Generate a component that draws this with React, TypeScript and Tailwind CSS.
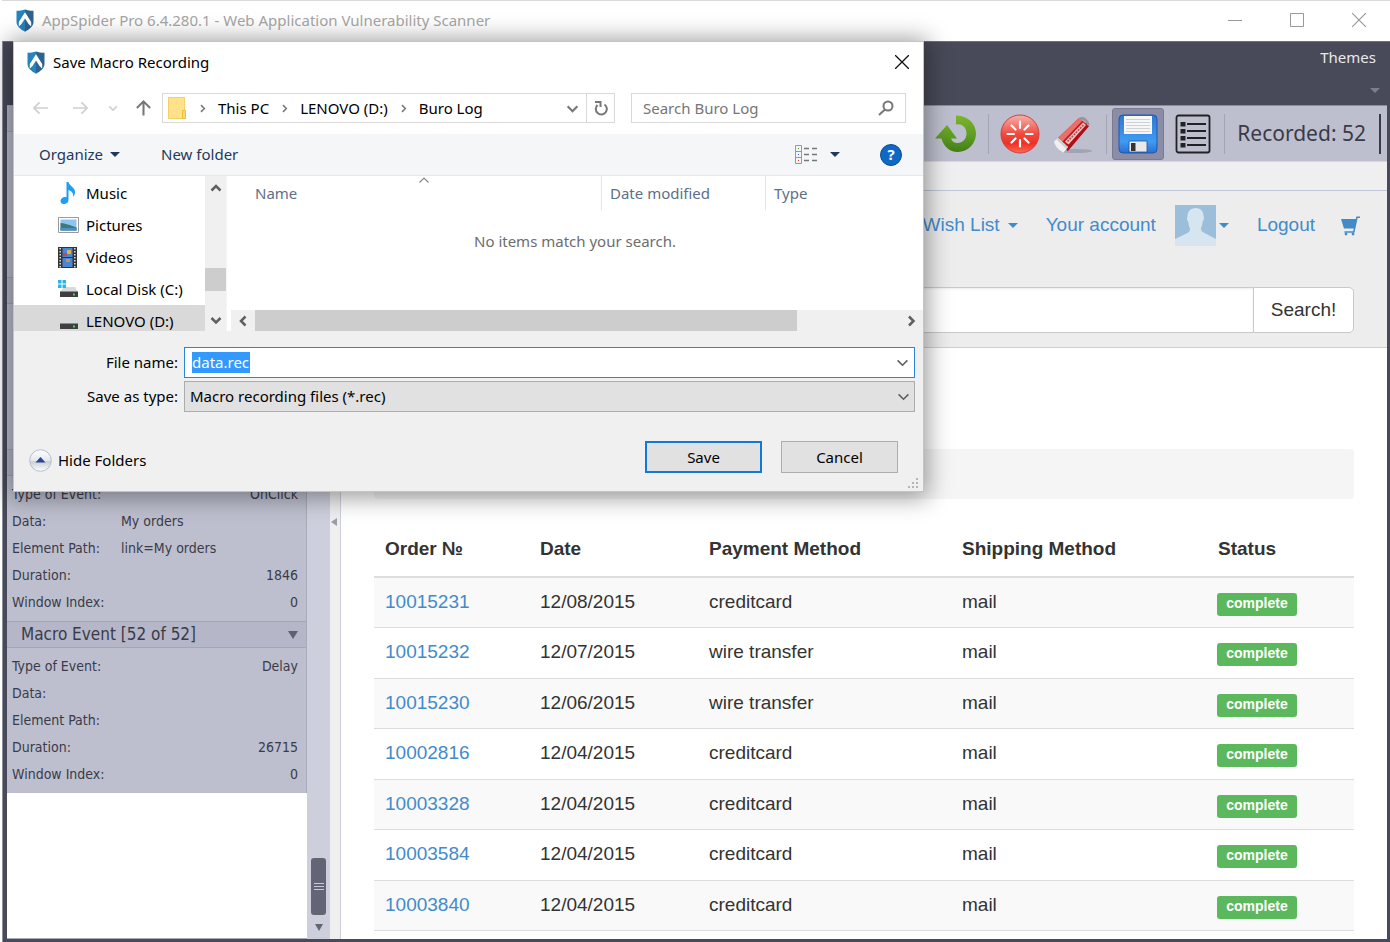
import type { ReactNode } from "react";

type MacroEvent = {
  title?: string;
  rows: { label: string; value?: string; align?: "left" | "right" }[];
};

const macroEvents: MacroEvent[] = [
  { rows: [] },
  { rows: [] },
  {
    rows: [
      { label: "Type of Event:", value: "OnClick", align: "right" },
      { label: "Data:", value: "My orders", align: "left" },
      { label: "Element Path:", value: "link=My orders", align: "left" },
      { label: "Duration:", value: "1846", align: "right" },
      { label: "Window Index:", value: "0", align: "right" },
    ],
  },
  {
    title: "Macro Event [52 of 52]",
    rows: [
      { label: "Type of Event:", value: "Delay", align: "right" },
      { label: "Data:" },
      { label: "Element Path:" },
      { label: "Duration:", value: "26715", align: "right" },
      { label: "Window Index:", value: "0", align: "right" },
    ],
  },
];

const orders = [
  { id: "10015231", date: "12/08/2015", payment: "creditcard" },
  { id: "10015232", date: "12/07/2015", payment: "wire transfer" },
  { id: "10015230", date: "12/06/2015", payment: "wire transfer" },
  { id: "10002816", date: "12/04/2015", payment: "creditcard" },
  { id: "10003328", date: "12/04/2015", payment: "creditcard" },
  { id: "10003584", date: "12/04/2015", payment: "creditcard" },
  { id: "10003840", date: "12/04/2015", payment: "creditcard" },
];

function ShieldIcon() {
  return (
    <svg width="18" height="23" viewBox="0 0 18 23" className="shrink-0">
      <path d="M9 .5C6.500 1.500 3.500 1.800.5 1.800V13c0 4.500 4.500 7.500 8.500 9.700z" fill="#2583bd" />
      <path d="M9 .5c2.500 1 5.500 1.300 8.500 1.300V13c0 4.500-4.500 7.500-8.500 9.700z" fill="#2d6390" />
      <path d="M9 3.200 15.200 13v4.500L12.500 15 9 9.500 5.500 15l-2.700 2.500V13z" fill="#fff" />
    </svg>
  );
}

function Chevron({
  dir,
  size = 12,
  color = "#606060",
  stroke = 2,
}: {
  dir: "up" | "down" | "left" | "right";
  size?: number;
  color?: string;
  stroke?: number;
}) {
  const paths = {
    up: "M1.500 8.500 6 4l4.500 4.500",
    down: "M1.500 4 6 8.500 10.500 4",
    left: "M8.500 1.500 4 6l4.500 4.500",
    right: "M4 1.500 8.500 6 4 10.500",
  };
  return (
    <svg width={size} height={size} viewBox="0 0 12 12" fill="none" className="shrink-0">
      <path d={paths[dir]} stroke={color} strokeWidth={stroke} />
    </svg>
  );
}

function Caret({ className, width = 10 }: { className: string; width?: number }) {
  return (
    <svg width={width} height={width / 2} viewBox="0 0 10 5" className={`shrink-0 ${className}`}>
      <path d="M0 0h10L5 5z" fill="currentColor" />
    </svg>
  );
}

function TitleBar() {
  return (
    <header className="flex h-[41px] shrink-0 items-center border-t border-[#d9d9d9] bg-white pb-[2px] pl-[14px]">
      <ShieldIcon />
      <h1 className="flex-1 pl-2 text-[15px] text-[#a6a6a6]">
        AppSpider Pro 6.4.280.1 - Web Application Vulnerability Scanner
      </h1>
      <div className="flex items-center gap-12 pr-6 text-[#999]">
        <button aria-label="Minimize">
          <svg width="14" height="14" viewBox="0 0 14 14">
            <path d="M0 7.500h14" stroke="currentColor" />
          </svg>
        </button>
        <button aria-label="Maximize">
          <svg width="14" height="14" viewBox="0 0 14 14" fill="none">
            <path d="M.5.5h13v13H.5z" stroke="currentColor" />
          </svg>
        </button>
        <button aria-label="Close">
          <svg width="14" height="14" viewBox="0 0 14 14">
            <path d="m0 0 14 14M14 0 0 14" stroke="currentColor" strokeWidth="1.200" />
          </svg>
        </button>
      </div>
    </header>
  );
}

function Ribbon() {
  return (
    <div className="flex h-16 shrink-0 flex-col items-end border-t border-[#6f7180] bg-[#484a59]">
      <button className="pt-[3px] pr-[14px] text-[15px] leading-6 text-[#e8e8ee]">Themes</button>
      <Caret className="mt-[19px] mr-[10px] text-[#7c7e90]" />
    </div>
  );
}

function EventGroup({ title, rows }: MacroEvent) {
  return (
    <section className="h-[172px] border-r border-[#a9aaba] bg-[#bdbfce]">
      <div className="flex h-[27px] items-center justify-between border-y border-[#a4a6b6] bg-[#b5b7c8] pr-2 pl-[14px]">
        <h2 className="text-[17px] text-[#3a3b49]">{title}</h2>
        {title && (
          <button aria-label="Collapse">
            <svg width="10" height="8" viewBox="0 0 10 8">
              <path d="M0 0h10L5 8z" fill="#5f6173" />
            </svg>
          </button>
        )}
      </div>
      <dl className="pt-[5px] pr-2 pl-[5px] text-[14px] text-[#3a3b49]">
        {rows.map((row) => (
          <div key={row.label} className="flex h-[27px] items-center">
            <dt className="w-[109px]">{row.label}</dt>
            <dd className={row.align === "right" ? "flex-1 text-right" : "flex-1"}>{row.value}</dd>
          </div>
        ))}
      </dl>
    </section>
  );
}

function Sidebar() {
  return (
    <aside className="flex w-[323px] shrink-0 bg-white font-['DejaVu_Sans_Condensed','DejaVu_Sans',sans-serif]">
      <div className="flex-1 border-b border-[#a9aaba]">
        {macroEvents.map((event, i) => (
          <EventGroup key={i} {...event} />
        ))}
      </div>
      <div className="flex w-[23px] flex-col items-center justify-end bg-[#cdcfdc] pb-2">
        <div className="flex h-[57px] w-[15px] flex-col items-center justify-center gap-[2px] rounded-[3px] bg-[#636577]">
          <span className="h-px w-[10px] bg-[#c8cad6]" />
          <span className="h-px w-[10px] bg-[#c8cad6]" />
          <span className="h-px w-[10px] bg-[#c8cad6]" />
        </div>
        <svg width="8" height="7" viewBox="0 0 8 7" className="mt-[9px]">
          <path d="M0 0h8L4 7z" fill="#636577" />
        </svg>
      </div>
    </aside>
  );
}

function Splitter() {
  return (
    <div className="flex w-[11px] shrink-0 items-center border-r border-[#cdcfdc] bg-[#efefef] pl-px">
      <svg width="6" height="8" viewBox="0 0 6 8">
        <path d="M6 0v8L0 4z" fill="#9a9cab" />
      </svg>
    </div>
  );
}

function RefreshIcon() {
  return (
    <svg width="42" height="38" viewBox="0 0 42 38">
      <defs>
        <linearGradient id="leaf" x1="0" y1="0" x2="0" y2="1">
          <stop offset="0" stopColor="#7cb52c" />
          <stop offset=".6" stopColor="#5c9a22" />
          <stop offset="1" stopColor="#437d18" />
        </linearGradient>
      </defs>
      <path
        d="M21 .5C32 0 41 8.500 41 18.500 41 28.500 33 37 23 37 14 37 8.500 31 6.500 23.500H0L12 10 22 23.500H16c1 3 3.500 4.500 6.500 4.500 5 0 9-4 9-9.500C31.500 13 27.500 8 21 9.500z"
        fill="url(#leaf)"
      />
    </svg>
  );
}

function RecordIcon() {
  return (
    <svg width="40" height="40" viewBox="0 0 40 40">
      <defs>
        <linearGradient id="rec" x1="0" y1="0" x2="0" y2="1">
          <stop offset="0" stopColor="#f7b3ac" />
          <stop offset=".5" stopColor="#ee4a40" />
          <stop offset=".75" stopColor="#f03026" />
          <stop offset="1" stopColor="#ff6a55" />
        </linearGradient>
      </defs>
      <circle cx="20" cy="20" r="19" fill="url(#rec)" stroke="#c9403a" />
      <g stroke="#fff" strokeWidth="2.200" strokeLinecap="round">
        <path d="M20 7.500V14M20 26v6.500M7.500 20H14M26 20h6.500" />
        <path d="m11.500 11.500 4 4M24.500 24.500l4 4M28.500 11.500l-4 4M15.500 24.500l-4 4" />
      </g>
    </svg>
  );
}

function EraserIcon() {
  return (
    <svg width="40" height="40" viewBox="0 0 40 40">
      <ellipse cx="23" cy="37" rx="16" ry="2" fill="#8f91a3" opacity=".6" />
      <path d="M5 24 26 4l10 8-21 25z" fill="#c9161c" />
      <path d="M5 24 26 4l3.500 2.500L9 28z" fill="#e8706a" />
      <path d="M12 32 33.500 8.500 36 12 14.500 37z" fill="#b00f18" />
      <path d="m12 27.500 18-19 3 2.500-17.500 19.500z" fill="#f0c4c0" />
      <path d="M14.500 27.500 31 10.500" stroke="#b84a4a" strokeWidth="1.600" strokeDasharray="2 1" />
      <path d="M25.500 4.500c2-2 5.500-2 8 .5s3.500 5 2.500 7.500l-2-1.500c-1-3-3-5-6-5.500z" fill="#98989c" />
      <path d="M1 27.500 5 24l10 9-4.500 5.500C7 37.500 2 32.500 1 27.500z" fill="#f0f0ef" />
      <path d="M5 24l10 9-1.500 2L3.500 25.500z" fill="#cfcfd0" />
    </svg>
  );
}

function FloppyIcon() {
  return (
    <svg width="40" height="40" viewBox="0 0 40 40">
      <defs>
        <linearGradient id="disk" x1="0" y1="0" x2="0" y2="1">
          <stop offset="0" stopColor="#2f78d3" />
          <stop offset=".7" stopColor="#3f9bf2" />
          <stop offset="1" stopColor="#2a6fd0" />
        </linearGradient>
      </defs>
      <rect x="1" y="1" width="38" height="38" rx="4" fill="url(#disk)" stroke="#2057b0" />
      <path d="M6 2h28v18H6z" fill="#f7f7f7" />
      <path d="M8 5.500h24M8 8.500h24M8 11.500h24M8 14.500h24M8 17.500h24" stroke="#c4c7cc" strokeWidth=".8" />
      <path d="M11 27h18v11H11z" fill="#e9e9e9" stroke="#24508f" strokeWidth=".8" />
      <path d="M13 29h4.500v8H13z" fill="#333" />
    </svg>
  );
}

function ListIcon() {
  return (
    <svg width="36" height="40" viewBox="0 0 36 40" fill="none">
      <rect x="1.500" y="1.500" width="33" height="37" rx="2" stroke="#222" strokeWidth="1.800" />
      <path d="M12 10h19M12 17h19M12 24h19M12 31h19" stroke="#222" strokeWidth="1.800" />
      <path d="M5.500 8h5v4.500h-5zM5.500 15h5v4.500h-5zM5.500 22h5v4.500h-5zM5.500 29h5v4.500h-5z" fill="#222" />
    </svg>
  );
}

function ToolbarDivider() {
  return <span className="h-10 w-px bg-[#a3a5b5]" />;
}

function RecorderToolbar() {
  return (
    <div className="flex h-14 shrink-0 items-center justify-end border-t border-[#8b8d9d] bg-[#bdbfce] pr-[6px]">
      <button aria-label="Refresh" className="mr-[11px]">
        <RefreshIcon />
      </button>
      <ToolbarDivider />
      <button aria-label="Record" className="ml-[11px]">
        <RecordIcon />
      </button>
      <button aria-label="Erase" className="mx-[13px]">
        <EraserIcon />
      </button>
      <ToolbarDivider />
      <button
        aria-label="Save"
        className="mr-[11px] ml-[5px] flex size-[52px] items-center justify-center rounded-[3px] border border-[#797b90] bg-[#8b8da6]"
      >
        <FloppyIcon />
      </button>
      <button aria-label="Event list" className="mr-[13px]">
        <ListIcon />
      </button>
      <ToolbarDivider />
      <span className="ml-3 text-[21px] text-[#3a3b49]">Recorded: 52</span>
      <span className="ml-[13px] h-10 w-[2px] bg-[#3a3b49]" />
    </div>
  );
}

function ShopHeader() {
  return (
    <div className="border-y border-t-[#c0c6d8] border-b-[#cfcfcf] bg-[#ededed] pb-[14px]">
      <nav className="flex h-[69px] items-center justify-end pr-[27px] text-[19px] text-[#428bca]">
        <a href="#wishlist" className="flex items-center gap-2">
          Wish List <Caret className="text-[#428bca]" />
        </a>
        <a href="#account" className="ml-7">
          Your account
        </a>
        <a href="#profile" aria-label="Profile" className="ml-[19px] flex items-center gap-[3px]">
          <svg width="41" height="41" viewBox="0 0 41 41">
            <path d="M0 0h41v41H0z" fill="#9bbfda" />
            <path
              d="M20.500 3c5 0 8 3 8 8 1 1.500.5 4-.8 5.500-.3 3-.9 5-1.700 6.500 0 3 1 4 4 5.200L41 34v7H0v-7l11-5.300c3-1.200 4-2.200 4-5.200-.8-1.500-1.400-3.500-1.700-6.500-1.300-1.500-1.800-4-.8-5.500 0-5 3-8.500 8-8.500z"
              fill="#d6e5ef"
            />
          </svg>
          <Caret className="text-[#428bca]" />
        </a>
        <a href="#logout" className="ml-7">
          Logout
        </a>
        <a href="#cart" aria-label="Cart" className="ml-[26px]">
          <svg width="19" height="20" viewBox="0 0 19 20">
            <path d="M0 3h16l-2.200 9.500H3z" fill="#428bca" />
            <path d="M19 1.200h-3L12.800 16H3.500" fill="none" stroke="#428bca" strokeWidth="1.600" />
            <circle cx="5" cy="18" r="1.400" fill="#428bca" />
            <circle cx="12" cy="18" r="1.400" fill="#428bca" />
          </svg>
        </a>
      </nav>
      <form className="mx-[33px] mt-[27px] flex h-[46px]">
        <input
          aria-label="Search products"
          className="min-w-0 flex-1 rounded-l border border-r-0 border-[#c9c9c9] bg-white px-3 text-[19px] shadow-[inset_0_1px_2px_rgba(0,0,0,0.08)]"
        />
        <button
          type="button"
          className="w-[101px] rounded-r-[5px] border border-[#c9c9c9] bg-white text-[19px] text-[#333]"
        >
          Search!
        </button>
      </form>
    </div>
  );
}

function OrdersTable() {
  return (
    <table className="w-full table-fixed text-left text-[19px] text-[#333]">
      <thead>
        <tr className="h-[54px] border-b-2 border-[#ddd]">
          <th className="w-[155px] pl-[11px]">Order №</th>
          <th className="w-[169px] pl-[11px]">Date</th>
          <th className="w-[253px] pl-[11px]">Payment Method</th>
          <th className="w-[256px] pl-[11px]">Shipping Method</th>
          <th className="pl-[11px]">Status</th>
        </tr>
      </thead>
      <tbody>
        {orders.map((order) => (
          <tr key={order.id} className="border-b border-[#ddd] odd:h-[50px] odd:bg-[#f9f9f9] even:h-[51px]">
            <td className="pl-[11px]">
              <a href={`#order-${order.id}`} className="text-[#428bca]">
                {order.id}
              </a>
            </td>
            <td className="pl-[11px]">{order.date}</td>
            <td className="pl-[11px]">{order.payment}</td>
            <td className="pl-[11px]">mail</td>
            <td className="pt-1 pl-[10px]">
              <span className="block h-[23px] w-20 rounded-[3px] bg-[#5cb85c] text-center text-[14px] leading-5 font-bold text-white">
                complete
              </span>
            </td>
          </tr>
        ))}
      </tbody>
    </table>
  );
}

function BrowserPane() {
  return (
    <main className="flex min-w-0 flex-1 flex-col">
      <RecorderToolbar />
      <div className="flex flex-1 flex-col border-t border-[#d6d7e0] bg-[#efefef] pt-7 font-['Liberation_Sans',Arial,sans-serif]">
        <ShopHeader />
        <div className="flex-1 bg-white px-[33px] pt-[101px]">
          <div className="h-[50px] rounded bg-[#f5f5f5]" />
          <div className="pt-6">
            <OrdersTable />
          </div>
        </div>
      </div>
    </main>
  );
}

function AddressRow() {
  return (
    <div className="mt-[11px] flex h-[30px] items-center pr-[17px] pl-[18px]">
      <button aria-label="Back" className="text-[#d0d0d0]">
        <svg width="17" height="16" viewBox="0 0 18 16" fill="none" stroke="currentColor" strokeWidth="1.800">
          <path d="M17 8H2M8 2 2 8l6 6" />
        </svg>
      </button>
      <button aria-label="Forward" className="ml-[23px] text-[#d0d0d0]">
        <svg width="17" height="16" viewBox="0 0 18 16" fill="none" stroke="currentColor" strokeWidth="1.800">
          <path d="M1 8h15M10 2l6 6-6 6" />
        </svg>
      </button>
      <button aria-label="Recent locations" className="ml-[19px]">
        <Chevron dir="down" size={10} color="#d0d0d0" />
      </button>
      <button aria-label="Up" className="ml-[17px] text-[#777]">
        <svg width="17" height="18" viewBox="0 0 18 18" fill="none" stroke="currentColor" strokeWidth="2.200">
          <path d="M9 17V2M2 9l7-7 7 7" />
        </svg>
      </button>
      <div className="ml-[10px] flex h-[30px] w-[453px] border border-[#d9d9d9]">
        <div className="flex flex-1 items-center gap-[11px] pl-[5px] text-black">
          <svg width="19" height="22" viewBox="0 0 19 22">
            <path d="M.5.5h16v21H.5z" fill="#ffe28a" stroke="#f3cf66" />
            <path d="M14.500 13.500h3v8h-3z" fill="#ffdb6e" stroke="#ecbd3c" />
          </svg>
          <Chevron dir="right" size={9} color="#777" />
          <span>This PC</span>
          <Chevron dir="right" size={9} color="#777" />
          <span>LENOVO (D:)</span>
          <Chevron dir="right" size={9} color="#777" />
          <span>Buro Log</span>
        </div>
        <button aria-label="Previous locations" className="px-[7px]">
          <Chevron dir="down" size={13} color="#777" />
        </button>
        <button aria-label="Refresh folder" className="flex w-7 items-center justify-center border-l border-[#d9d9d9]">
          <svg width="14" height="16" viewBox="0 0 14 16" fill="none" stroke="#777" strokeWidth="2">
            <path d="M10.500 4.500A5.500 5.500 0 1 1 3.500 5" />
            <path d="M1 2h5.500v5" />
          </svg>
        </button>
      </div>
      <div className="ml-4 flex h-[30px] flex-1 items-center border border-[#d9d9d9] pr-[11px] pl-[11px]">
        <input
          aria-label="Search Buro Log"
          placeholder="Search Buro Log"
          className="min-w-0 flex-1 outline-none placeholder:text-[#767676]"
        />
        <svg width="16" height="16" viewBox="0 0 16 16" fill="none" stroke="#777" strokeWidth="2">
          <circle cx="10" cy="6" r="4.500" />
          <path d="M7 9.500 1 15" />
        </svg>
      </div>
    </div>
  );
}

function CommandBar() {
  return (
    <div className="mt-[11px] flex h-[42px] items-center border-b border-[#e6e8eb] bg-[#f4f6f8] pr-[21px] pl-[25px] text-[#1e395b]">
      <button className="flex items-center gap-[7px]">
        Organize <Caret className="text-[#1e395b]" />
      </button>
      <button className="ml-[41px]">New folder</button>
      <button aria-label="Change view" className="ml-auto flex items-center gap-3">
        <svg width="23" height="19" viewBox="0 0 23 19" fill="none">
          <path d="M.5.5h6v18h-6zM.5 6.500h6M.5 12.500h6" stroke="#999" />
          <path d="M9 3.500h5M17 3.500h5M9 9.500h5M17 9.500h5M9 15.500h5M17 15.500h5" stroke="#777" strokeWidth="1.400" />
          <path d="M3 3h1v1H3z" fill="#3a8a4a" />
          <path d="M3 9h1v1H3z" fill="#3366cc" />
          <path d="M3 15h1v1H3z" fill="#d33" />
        </svg>
        <Caret className="text-[#1e395b]" />
      </button>
      <button
        aria-label="Help"
        className="ml-10 flex size-[22px] items-center justify-center rounded-full border border-[#0b4b94] bg-[#0f68c4] text-[15px] font-bold text-white"
      >
        ?
      </button>
    </div>
  );
}

function DriveIcon({ system = false }: { system?: boolean }) {
  return (
    <svg width="21" height="18" viewBox="0 0 21 18">
      <path d="M6 7h11l3 5H2z" fill="#d8d9da" />
      <path d="M2 11.500h18V17H2z" fill="#3c3e40" />
      <path d="M15 13.500h2v2h-2z" fill="#49d353" />
      {system && <path d="M0 0h3.500v3.500H0zM4.500 0H8v3.500H4.500zM0 4.500h3.500V8H0zM4.500 4.500H8V8H4.500z" fill="#27b5ee" />}
    </svg>
  );
}

const places: { name: string; icon: ReactNode; selected?: boolean }[] = [
  {
    name: "Music",
    icon: (
      <svg width="21" height="22" viewBox="0 0 21 22">
        <path
          d="M8.500 0h2c.5 4 6.500 5 6.500 10 0 2-.8 3.500-2 5 .8-4-1.500-6-4.500-7v10c0 2.500-2.200 4-4.500 4S2.500 21 2.500 19s2-4 4.500-4c.5 0 1 0 1.500.2z"
          fill="#1e9df2"
        />
      </svg>
    ),
  },
  {
    name: "Pictures",
    icon: (
      <svg width="21" height="16" viewBox="0 0 21 16">
        <path d="M.5.5h20v15H.5z" fill="#fff" stroke="#9a9a9a" />
        <path d="M2.500 2.500h16v11h-16z" fill="#8ec5f0" />
        <path d="M2.500 6c5 .5 9 2 16 4.500v3h-16z" fill="#3f7a78" />
        <path d="M2.500 11h16v2.500h-16z" fill="#4f8fc4" />
      </svg>
    ),
  },
  {
    name: "Videos",
    icon: (
      <svg width="19" height="21" viewBox="0 0 19 21">
        <path d="M0 0h19v21H0z" fill="#333" />
        <path d="M4.500 1h10v9h-10zM4.500 11h10v9h-10z" fill="#4a86d8" />
        <path d="M9 3h4v4H9z" fill="#e0b63a" />
        <path d="M5 6h4v3H5z" fill="#c84a3c" />
        <path d="M8 12h4v3H8z" fill="#d98f35" />
        <path d="M2.200 1v20M16.800 1v20" stroke="#ddd" strokeWidth="1.600" strokeDasharray="1.500 1.500" />
      </svg>
    ),
  },
  { name: "Local Disk (C:)", icon: <DriveIcon system /> },
  { name: "LENOVO (D:)", icon: <DriveIcon />, selected: true },
];

function PlacesTree() {
  return (
    <div className="flex w-[213px] shrink-0 border-r border-[#f4f4f4]">
      <ul className="flex-1 pt-px text-black">
        {places.map((place) => (
          <li
            key={place.name}
            className={`flex h-8 items-center pl-11 ${place.selected ? "bg-[#d9d9d9]" : ""}`}
          >
            <span className="flex w-7 items-center">{place.icon}</span>
            {place.name}
          </li>
        ))}
      </ul>
      <div className="flex w-[21px] flex-col items-center bg-[#f0f0f0] pt-[6px] pb-[5px]">
        <Chevron dir="up" stroke={2.5} />
        <div className="mt-auto h-[23px] w-full bg-[#cdcdcd]" />
        <div className="mt-[23px]">
          <Chevron dir="down" stroke={2.5} />
        </div>
      </div>
    </div>
  );
}

function FileList() {
  return (
    <div className="relative flex min-w-0 flex-1 flex-col">
      <div className="flex h-[34px] shrink-0 items-center pl-[6px] text-[#5e6f88]">
        <button className="h-full flex-1 border-r border-[#e5e5e5] pl-[22px] text-left">Name</button>
        <button className="h-full w-[164px] border-r border-[#e5e5e5] pl-2 text-left">Date modified</button>
        <button className="h-full w-[157px] pl-2 text-left">Type</button>
      </div>
      <span className="absolute top-[-2px] left-[191px]">
        <Chevron dir="up" color="#888" stroke={1.2} />
      </span>
      <p className="flex-1 pt-5 text-center text-[#6d6d6d]">No items match your search.</p>
      <div className="ml-1 flex h-[21px] items-center bg-[#f0f0f0] pr-[6px] pl-[6px]">
        <Chevron dir="left" stroke={2.5} />
        <div className="ml-[6px] h-[21px] w-[542px] bg-[#cdcdcd]" />
        <span className="ml-auto">
          <Chevron dir="right" stroke={2.5} />
        </span>
      </div>
    </div>
  );
}

function SaveDialog() {
  return (
    <div
      role="dialog"
      aria-label="Save Macro Recording"
      className="absolute top-[41px] left-[13px] w-[911px] border border-[#a8cbea] bg-[#f0f0f0] text-[15px] text-black shadow-[0_2px_22px_4px_rgba(0,0,0,0.38)]"
    >
      <div className="bg-white">
        <div className="flex h-10 items-center pr-[14px] pl-[13px]">
          <ShieldIcon />
          <h2 className="flex-1 pl-2">Save Macro Recording</h2>
          <button aria-label="Close dialog">
            <svg width="14" height="14" viewBox="0 0 14 14">
              <path d="m0 0 14 14M14 0 0 14" stroke="#111" strokeWidth="1.300" />
            </svg>
          </button>
        </div>
        <AddressRow />
        <CommandBar />
        <div className="flex h-[155px] overflow-hidden">
          <PlacesTree />
          <FileList />
        </div>
      </div>
      <div className="flex flex-col gap-[3px] pt-4 pr-2 pl-[9px]">
        <div className="flex items-center">
          <label htmlFor="file-name" className="w-[155px] text-right">
            File name:
          </label>
          <div className="ml-[6px] flex h-[31px] flex-1 items-center border border-[#2b86d6] bg-white px-[7px]">
            <input
              id="file-name"
              defaultValue="data.rec"
              className="h-[21px] [field-sizing:content] border-r border-[#d9701a] bg-[#3399ff] text-white outline-none"
            />
            <span className="-mr-[2px] ml-auto">
              <Chevron dir="down" size={13} stroke={1.5} />
            </span>
          </div>
        </div>
        <div className="flex items-center">
          <label htmlFor="file-type" className="w-[155px] text-right">
            Save as type:
          </label>
          <div className="relative ml-[6px] flex-1">
            <select
              id="file-type"
              className="h-[31px] w-full appearance-none border border-[#acacac] bg-[#e1e1e1] pl-[5px]"
            >
              <option>Macro recording files (*.rec)</option>
            </select>
            <span className="pointer-events-none absolute top-[9px] right-[5px]">
              <Chevron dir="down" size={13} stroke={1.5} />
            </span>
          </div>
        </div>
      </div>
      <div className="flex items-center pt-[29px] pr-[25px] pl-[15px]">
        <button className="flex items-center gap-[6px] pt-[7px]">
          <svg width="23" height="23" viewBox="0 0 23 23">
            <defs>
              <linearGradient id="knob" x1="0" y1="0" x2="0" y2="1">
                <stop offset="0" stopColor="#fff" />
                <stop offset=".5" stopColor="#e4e8ea" />
                <stop offset=".55" stopColor="#c9d0d2" />
                <stop offset="1" stopColor="#fff" />
              </linearGradient>
            </defs>
            <circle cx="11.500" cy="11.500" r="10.800" fill="url(#knob)" stroke="#b4bcd8" />
            <path d="M6.500 13.500h10l-5-5.500z" fill="#28449a" />
          </svg>
          Hide Folders
        </button>
        <button className="ml-auto h-8 w-[117px] border-2 border-[#0f7ad8] bg-[#e1e1e1]">Save</button>
        <button className="ml-[19px] h-8 w-[117px] border border-[#adadad] bg-[#e1e1e1]">Cancel</button>
      </div>
      <div className="flex h-[18px] justify-end pt-[5px] pr-1">
        <svg width="12" height="11" viewBox="0 0 12 11" fill="#b5b5b5">
          <path d="M9 0h2v2H9zM9 4h2v2H9zM9 8h2v2H9zM5 4h2v2H5zM5 8h2v2H5zM1 8h2v2H1z" />
        </svg>
      </div>
    </div>
  );
}

export default function App() {
  return (
    <div className="relative flex min-h-screen flex-col bg-white pl-[2px] font-['Noto_Sans','Open_Sans',sans-serif] leading-normal">
      <TitleBar />
      <div className="flex flex-1 flex-col border-l border-[#8d8f99] bg-[#484a59]">
        <Ribbon />
        <div className="flex flex-1 border-r-[3px] border-b-[3px] border-l-4 border-[#484a59]">
          <Sidebar />
          <Splitter />
          <BrowserPane />
        </div>
      </div>
      <SaveDialog />
    </div>
  );
}
